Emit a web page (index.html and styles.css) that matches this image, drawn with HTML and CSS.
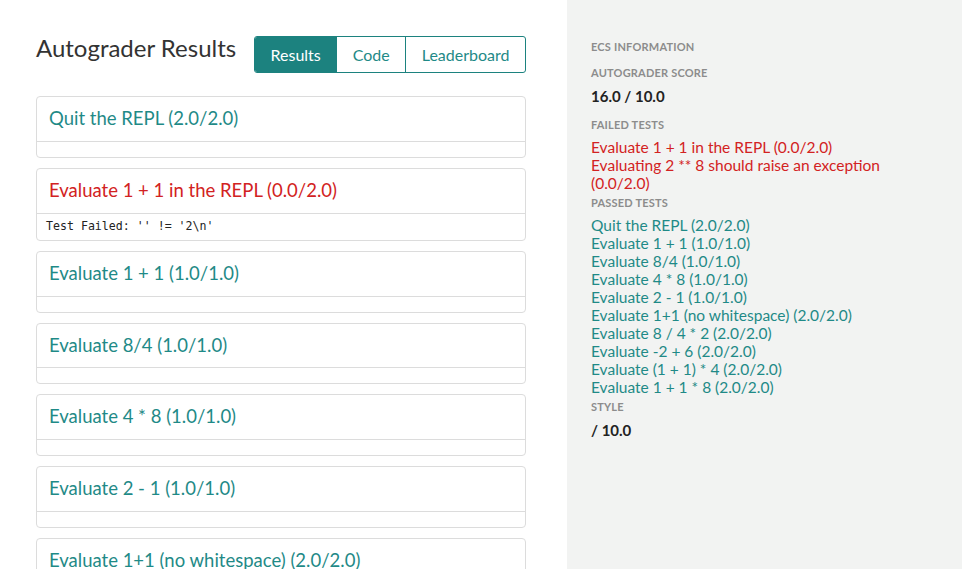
FILE: index.html
```html
<!DOCTYPE html>
<html>
<head>
<meta charset="utf-8">
<link rel="stylesheet" href="styles.css">
</head>
<body>
<div class="page">
  <main class="main">
    <div class="topbar">
      <h1 class="title">Autograder Results</h1>
      <div class="tabs">
        <a class="tab active">Results</a>
        <a class="tab">Code</a>
        <a class="tab">Leaderboard</a>
      </div>
    </div>
    <div class="card">
      <div class="card-head pass">Quit the REPL (2.0/2.0)</div>
      <div class="card-body"></div>
    </div>
    <div class="card">
      <div class="card-head fail">Evaluate 1 + 1 in the REPL (0.0/2.0)</div>
      <div class="card-body"><pre class="output">Test Failed: '' != '2\n'</pre></div>
    </div>
    <div class="card">
      <div class="card-head pass">Evaluate 1 + 1 (1.0/1.0)</div>
      <div class="card-body"></div>
    </div>
    <div class="card">
      <div class="card-head pass">Evaluate 8/4 (1.0/1.0)</div>
      <div class="card-body"></div>
    </div>
    <div class="card">
      <div class="card-head pass">Evaluate 4 * 8 (1.0/1.0)</div>
      <div class="card-body"></div>
    </div>
    <div class="card">
      <div class="card-head pass">Evaluate 2 - 1 (1.0/1.0)</div>
      <div class="card-body"></div>
    </div>
    <div class="card">
      <div class="card-head pass">Evaluate 1+1 (no whitespace) (2.0/2.0)</div>
      <div class="card-body"></div>
    </div>
  </main>
  <aside class="side">
    <div class="label head-label">ECS INFORMATION</div>
    <div class="label">AUTOGRADER SCORE</div>
    <div class="score">16.0 / 10.0</div>
    <div class="label list-label">FAILED TESTS</div>
    <ul class="tests fail">
      <li>Evaluate 1 + 1 in the REPL (0.0/2.0)</li>
      <li>Evaluating 2 ** 8 should raise an exception (0.0/2.0)</li>
    </ul>
    <div class="label list-label">PASSED TESTS</div>
    <ul class="tests pass">
      <li>Quit the REPL (2.0/2.0)</li>
      <li>Evaluate 1 + 1 (1.0/1.0)</li>
      <li>Evaluate 8/4 (1.0/1.0)</li>
      <li>Evaluate 4 * 8 (1.0/1.0)</li>
      <li>Evaluate 2 - 1 (1.0/1.0)</li>
      <li>Evaluate 1+1 (no whitespace) (2.0/2.0)</li>
      <li>Evaluate 8 / 4 * 2 (2.0/2.0)</li>
      <li>Evaluate -2 + 6 (2.0/2.0)</li>
      <li>Evaluate (1 + 1) * 4 (2.0/2.0)</li>
      <li>Evaluate 1 + 1 * 8 (2.0/2.0)</li>
    </ul>
    <div class="label">STYLE</div>
    <div class="score">/ 10.0</div>
  </aside>
</div>
</body>
</html>
```
FILE: styles.css
```css
html, body {
  margin: 0;
  padding: 0;
}
body {
  font-family: Lato, "Open Sans", sans-serif;
  color: #333;
  background: #fff;
}
.page {
  display: flex;
  min-height: 100vh;
}
.main {
  width: 490px;
  padding: 36px 41px 0 36px;
  flex: none;
}
.topbar {
  display: flex;
  justify-content: space-between;
  align-items: flex-start;
  margin-bottom: 23px;
}
.title {
  margin: 0;
  font-size: 24px;
  line-height: 24px;
  font-weight: 400;
  color: #333;
}
.tabs {
  display: flex;
  height: 37px;
  border: 1px solid #1c827f;
  border-radius: 3px;
  box-sizing: border-box;
  overflow: hidden;
}
.tab {
  display: flex;
  align-items: center;
  padding: 0 15.5px;
  font-size: 16px;
  color: #1f8a87;
  border-left: 1px solid #1c827f;
}
.tab:first-child {
  border-left: none;
}
.tab.active {
  background: #1c827f;
  color: #fff;
}
.card {
  border: 1px solid #dcdcdc;
  border-radius: 4px;
  margin-bottom: 10px;
}
.card-head {
  padding: 11px 12px;
  font-size: 18.5px;
  line-height: 21.85px;
  border-bottom: 1px solid #dcdcdc;
}
.card-body {
  padding: 7px 9px 8px;
}
.output {
  margin: 0;
  font-family: "DejaVu Sans Mono", monospace;
  font-size: 11.6px;
  line-height: 11px;
  color: #222;
}
.pass {
  color: #1f8a87;
}
.fail {
  color: #d22222;
}
.side {
  flex: 1;
  background: #f2f3f2;
  padding: 40px 24px 0 24px;
}
.label {
  font-size: 11px;
  line-height: 14px;
  font-weight: 700;
  color: #8c8c8c;
  letter-spacing: 0.2px;
  margin-bottom: 7px;
}
.head-label {
  margin-bottom: 12px;
}
.list-label {
  margin-bottom: 6px;
}
.score {
  font-size: 15px;
  line-height: 18px;
  font-weight: 700;
  color: #222;
  margin-bottom: 13px;
}
.tests {
  list-style: none;
  margin: 0 0 4px;
  padding: 0;
  font-size: 15.5px;
  line-height: 18px;
}
```
